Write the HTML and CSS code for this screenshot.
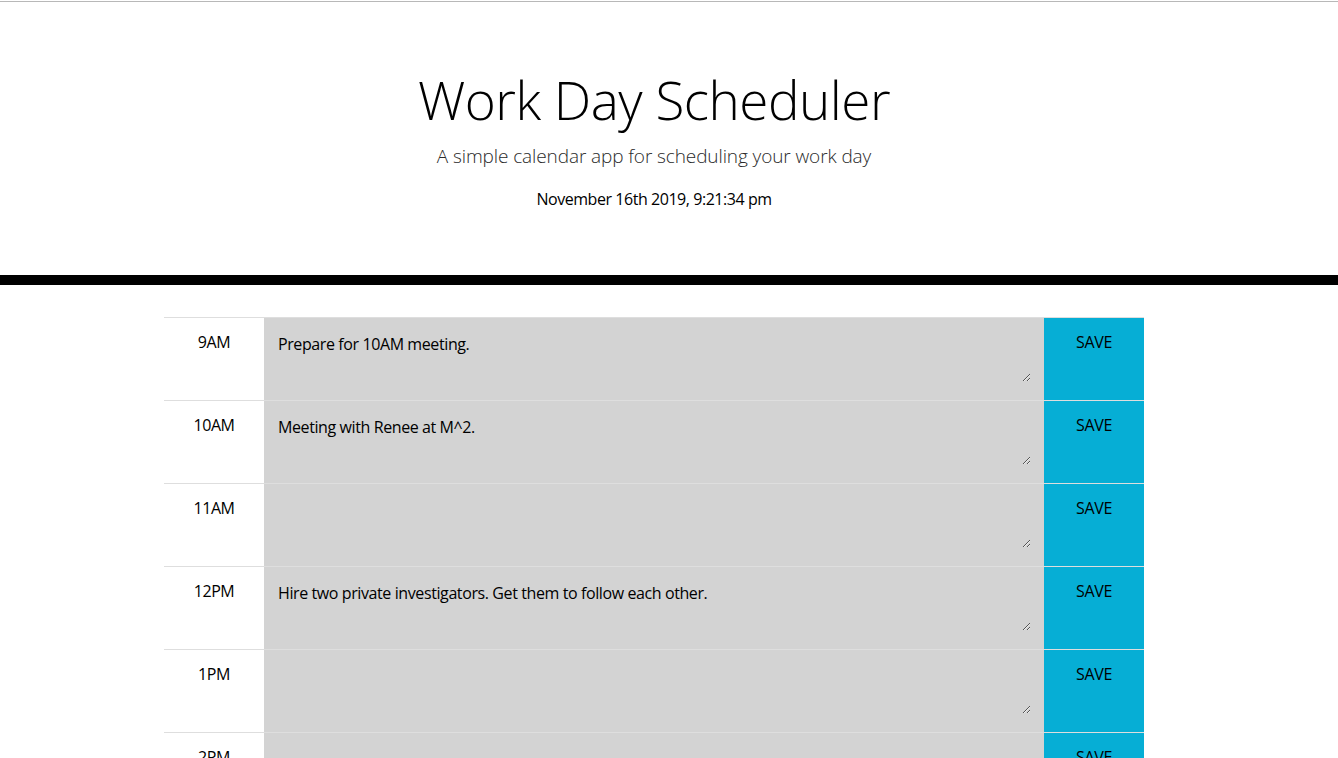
FILE: index.html
```html
<!DOCTYPE html>
<html lang="en">
<head>
<meta charset="utf-8">
<title>Work Day Scheduler</title>
<link rel="stylesheet" href="styles.css">
</head>
<body>
<div class="topline"></div>
<header class="jumbotron">
  <h1 class="display">Work Day Scheduler</h1>
  <p class="lead">A simple calendar app for scheduling your work day</p>
  <p class="current-day">November 16th 2019, 9:21:34 pm</p>
</header>
<main class="container">
  <div class="row">
    <div class="hour">9AM</div>
    <div class="cell past"><textarea class="desc">Prepare for 10AM meeting.</textarea></div>
    <button class="save-btn">SAVE</button>
  </div>
  <div class="row">
    <div class="hour">10AM</div>
    <div class="cell past"><textarea class="desc">Meeting with Renee at M^2.</textarea></div>
    <button class="save-btn">SAVE</button>
  </div>
  <div class="row">
    <div class="hour">11AM</div>
    <div class="cell past"><textarea class="desc"></textarea></div>
    <button class="save-btn">SAVE</button>
  </div>
  <div class="row">
    <div class="hour">12PM</div>
    <div class="cell past"><textarea class="desc">Hire two private investigators. Get them to follow each other.</textarea></div>
    <button class="save-btn">SAVE</button>
  </div>
  <div class="row">
    <div class="hour">1PM</div>
    <div class="cell past"><textarea class="desc"></textarea></div>
    <button class="save-btn">SAVE</button>
  </div>
  <div class="row">
    <div class="hour">2PM</div>
    <div class="cell past"><textarea class="desc"></textarea></div>
    <button class="save-btn">SAVE</button>
  </div>
  <div class="row">
    <div class="hour">3PM</div>
    <div class="cell past"><textarea class="desc"></textarea></div>
    <button class="save-btn">SAVE</button>
  </div>
  <div class="row">
    <div class="hour">4PM</div>
    <div class="cell past"><textarea class="desc"></textarea></div>
    <button class="save-btn">SAVE</button>
  </div>
  <div class="row">
    <div class="hour">5PM</div>
    <div class="cell past"><textarea class="desc"></textarea></div>
    <button class="save-btn">SAVE</button>
  </div>
</main>
</body>
</html>
```

FILE: styles.css
```css
html {
  overflow: hidden;
}

body {
  margin: 0;
  font-family: "Open Sans", "Noto Sans", sans-serif;
  font-size: 16px;
  line-height: 1.5;
  color: #212529;
  background: #ffffff;
}

.topline {
  height: 1px;
  margin-top: 1px;
  background: #b8b8b8;
}

.jumbotron {
  padding: 64px 62px 64px 32px;
  text-align: center;
  border-bottom: 10px solid #000000;
  margin-bottom: 32px;
}

.display {
  margin: 0 0 8px;
  font-size: 53px;
  font-weight: 300;
  line-height: 68px;
  letter-spacing: -0.5px;
  color: #000000;
}

.lead {
  margin: 0 0 16px;
  font-size: 19px;
  font-weight: 300;
  line-height: 29px;
  letter-spacing: -0.1px;
  color: #2a2a2a;
}

.current-day {
  margin: 0;
  font-size: 16px;
  letter-spacing: -0.45px;
  color: #000000;
}

.container {
  width: 1010px;
  box-sizing: border-box;
  padding-right: 30px;
  margin: 0 auto;
}

.row {
  display: flex;
  height: 83px;
  box-sizing: border-box;
  border-top: 1px solid #dedede;
}

.hour {
  width: 100px;
  flex: none;
  padding-top: 12px;
  text-align: center;
  letter-spacing: -0.4px;
  color: #000000;
}

.cell {
  flex: 1;
  display: flex;
  padding: 10px 13px 18px 10px;
}

.past {
  background: #d3d3d3;
}

.desc {
  flex: 1;
  margin: 0;
  padding: 4px;
  border: none;
  background: transparent;
  font-family: inherit;
  font-size: 16px;
  line-height: 1.5;
  letter-spacing: -0.4px;
  color: #000000;
  outline: none;
}

.save-btn {
  width: 100px;
  flex: none;
  border: none;
  margin: 0;
  padding: 12px 0 0;
  display: flex;
  align-items: flex-start;
  justify-content: center;
  background: #06aed5;
  color: #000000;
  font-family: inherit;
  font-size: 16px;
  line-height: 1.5;
  letter-spacing: -0.3px;
}
```
